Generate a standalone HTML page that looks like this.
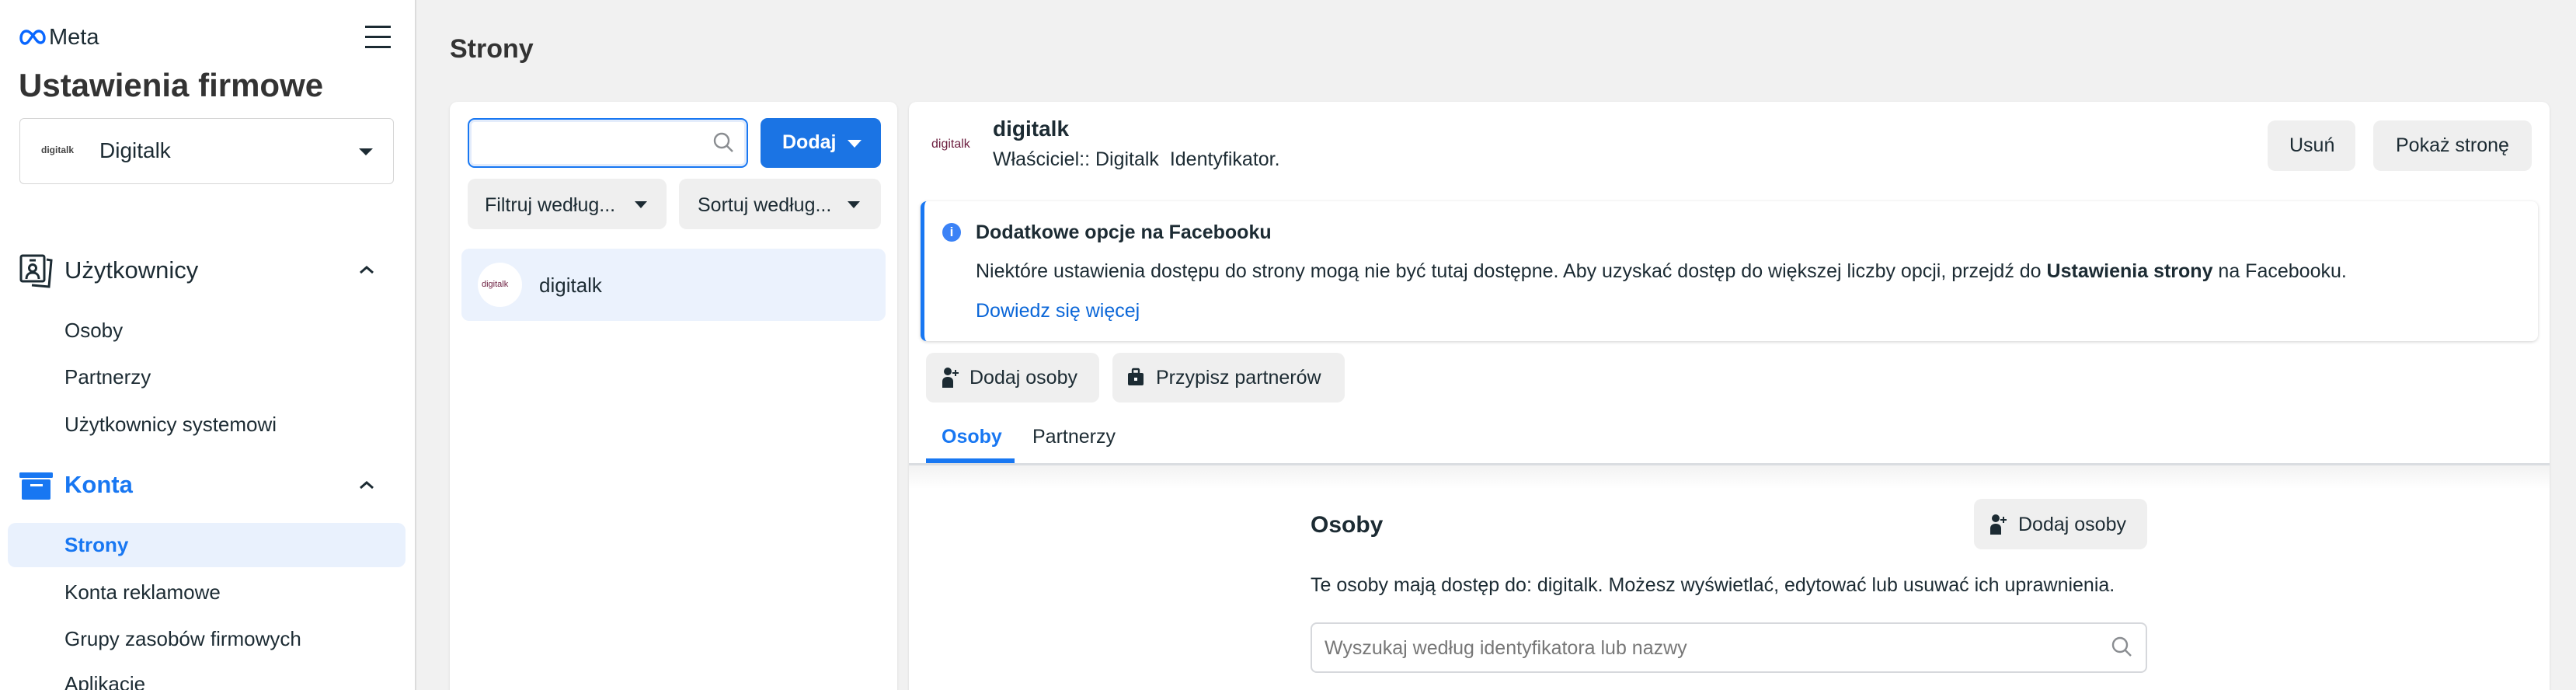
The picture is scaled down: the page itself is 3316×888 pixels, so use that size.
<!DOCTYPE html>
<html><head><meta charset="utf-8">
<style>
*{box-sizing:border-box;margin:0;padding:0}
html,body{width:3316px;height:888px;overflow:hidden}
body{background:#f1f1f1;font-family:"Liberation Sans",sans-serif;color:#1c2b33;position:relative}
.a{position:absolute}
.t{position:absolute;white-space:nowrap;line-height:1}
.btn{position:absolute;background:#efefef;border-radius:10px}
</style></head><body>
<!-- sidebar -->
<div class="a" style="left:0;top:0;width:536px;height:888px;background:#fff;border-right:2px solid #dcdcdc"></div>
<svg class="a" style="left:24px;top:37px" width="36" height="22" viewBox="0 0 34 22"><path d="M9 3C4 3 2 8 2 12c0 4 2 7 5 7 4 0 6-5 10-10 3-4 5-6 8-6 4 0 7 4 7 9 0 4-2 6-5 6-4 0-7-6-10-10C14 5 12 3 9 3z" fill="none" stroke="#0866ff" stroke-width="3.4"/></svg>
<div class="t" style="left:63px;top:34px;font-size:29px;color:#1c2b33">Meta</div>
<div class="a" style="left:470px;top:33px;width:33px;height:3px;background:#1c2b33"></div>
<div class="a" style="left:470px;top:46px;width:33px;height:3px;background:#1c2b33"></div>
<div class="a" style="left:470px;top:59px;width:33px;height:3px;background:#1c2b33"></div>
<div class="t" style="left:24px;top:89px;font-size:42px;font-weight:bold;color:#333">Ustawienia firmowe</div>
<div class="a" style="left:25px;top:152px;width:482px;height:85px;border:1.5px solid #d6d6d6;border-radius:6px"></div>
<div class="t" style="left:53px;top:187px;font-size:12px;font-weight:bold;color:#444">digitalk</div>
<div class="t" style="left:128px;top:180px;font-size:28px">Digitalk</div>
<div class="a" style="left:462px;top:191px;border-left:9px solid transparent;border-right:9px solid transparent;border-top:9px solid #1c2b33"></div>
<svg class="a" style="left:25px;top:327px" width="44" height="44" viewBox="0 0 44 44" fill="none" stroke="#1c2b33" stroke-width="3"><rect x="2" y="2" width="30" height="33" rx="2"/><circle cx="17" cy="18" r="4.5"/><path d="M9 32c0-6 4-8 8-8s8 2 8 8"/><path d="M13 8h8"/><path d="M35 7l6 1-3 34-22-2"/></svg>
<div class="t" style="left:83px;top:332px;font-size:31px">Użytkownicy</div>
<svg class="a" style="left:462px;top:340px" width="20" height="14"><path d="M2 11l8-7 8 7" fill="none" stroke="#1c2b33" stroke-width="3"/></svg>
<div class="t" style="left:83px;top:412px;font-size:26px">Osoby</div>
<div class="t" style="left:83px;top:472px;font-size:26px">Partnerzy</div>
<div class="t" style="left:83px;top:533px;font-size:26px">Użytkownicy systemowi</div>
<svg class="a" style="left:25px;top:608px" width="44" height="36"><rect x="0" y="0" width="43" height="7" rx="1.5" fill="#1877f2"/><rect x="3" y="9" width="37" height="26" rx="2" fill="#1877f2"/><rect x="14" y="15" width="16" height="3" fill="#fff"/></svg>
<div class="t" style="left:83px;top:608px;font-size:31px;font-weight:bold;color:#1877f2">Konta</div>
<svg class="a" style="left:462px;top:617px" width="20" height="14"><path d="M2 11l8-7 8 7" fill="none" stroke="#1c2b33" stroke-width="3"/></svg>
<div class="a" style="left:10px;top:673px;width:512px;height:57px;background:#e9f1fd;border-radius:10px"></div>
<div class="t" style="left:83px;top:688px;font-size:26px;font-weight:bold;color:#1877f2">Strony</div>
<div class="t" style="left:83px;top:749px;font-size:26px">Konta reklamowe</div>
<div class="t" style="left:83px;top:809px;font-size:26px">Grupy zasobów firmowych</div>
<div class="t" style="left:83px;top:867px;font-size:26px">Aplikacje</div>

<!-- main -->
<div class="t" style="left:579px;top:46px;font-size:34px;font-weight:bold;color:#333">Strony</div>
<div class="a" style="left:579px;top:131px;width:576px;height:770px;background:#fff;border-radius:10px;box-shadow:0 1px 3px rgba(0,0,0,.1)"></div>
<div class="a" style="left:602px;top:152px;width:361px;height:64px;border:2px solid #1877f2;border-radius:9px;box-shadow:inset 0 0 0 3px #e3ecfb"></div>
<svg class="a" style="left:917px;top:169px" width="30" height="30" fill="none" stroke="#8a8d91" stroke-width="2.4"><circle cx="12" cy="12" r="9"/><path d="M19 19l7 7"/></svg>
<div class="a" style="left:979px;top:152px;width:155px;height:64px;background:#1b74e4;border-radius:9px"></div>
<div class="t" style="left:1007px;top:171px;font-size:25px;font-weight:bold;color:#fff">Dodaj</div>
<div class="a" style="left:1091px;top:180px;border-left:9px solid transparent;border-right:9px solid transparent;border-top:10px solid #fff"></div>
<div class="btn" style="left:602px;top:230px;width:256px;height:65px"></div>
<div class="t" style="left:624px;top:252px;font-size:25px">Filtruj według...</div>
<div class="a" style="left:817px;top:259px;border-left:8px solid transparent;border-right:8px solid transparent;border-top:9px solid #1c2b33"></div>
<div class="btn" style="left:874px;top:230px;width:260px;height:65px"></div>
<div class="t" style="left:898px;top:252px;font-size:25px">Sortuj według...</div>
<div class="a" style="left:1091px;top:259px;border-left:8px solid transparent;border-right:8px solid transparent;border-top:9px solid #1c2b33"></div>
<div class="a" style="left:594px;top:320px;width:546px;height:93px;background:#ebf2fd;border-radius:10px"></div>
<div class="a" style="left:615px;top:338px;width:57px;height:57px;background:#fff;border-radius:50%"></div>
<div class="t" style="left:620px;top:361px;font-size:11px;color:#6b1d3e">digitalk</div>
<div class="t" style="left:694px;top:354px;font-size:26px">digitalk</div>

<!-- right panel -->
<div class="a" style="left:1170px;top:131px;width:2112px;height:770px;background:#fff;border-radius:10px;box-shadow:0 1px 3px rgba(0,0,0,.1)"></div>
<div class="t" style="left:1199px;top:178px;font-size:16px;color:#6b1d3e">digitalk</div>
<div class="t" style="left:1278px;top:152px;font-size:28px;font-weight:bold">digitalk</div>
<div class="t" style="left:1278px;top:193px;font-size:25px">Właściciel:: Digitalk&nbsp; Identyfikator.</div>
<div class="btn" style="left:2919px;top:155px;width:113px;height:65px"></div>
<div class="t" style="left:2947px;top:175px;font-size:25px">Usuń</div>
<div class="btn" style="left:3055px;top:155px;width:204px;height:65px"></div>
<div class="t" style="left:3084px;top:175px;font-size:25px">Pokaż stronę</div>

<div class="a" style="left:1185px;top:259px;width:2082px;height:180px;background:#fff;border-radius:8px;border-left:5px solid #1877f2;box-shadow:0 1px 4px rgba(0,0,0,.18)"></div>
<div class="a" style="left:1213px;top:287px;width:24px;height:24px;border-radius:50%;background:#3b82f6;color:#fff;font-size:17px;font-weight:bold;text-align:center;line-height:24px">i</div>
<div class="t" style="left:1256px;top:287px;font-size:25px;font-weight:bold">Dodatkowe opcje na Facebooku</div>
<div class="t" style="left:1256px;top:337px;font-size:25px">Niektóre ustawienia dostępu do strony mogą nie być tutaj dostępne. Aby uzyskać dostęp do większej liczby opcji, przejdź do <b>Ustawienia strony</b> na Facebooku.</div>
<div class="t" style="left:1256px;top:388px;font-size:25px;color:#0a66d8">Dowiedz się więcej</div>

<div class="btn" style="left:1192px;top:454px;width:223px;height:64px"></div>
<svg class="a" style="left:1212px;top:472px" width="22" height="28"><circle cx="8" cy="6" r="5" fill="#1c2b33"/><path d="M1 27v-8c0-4 3-6 7-6s7 2 7 6v8z" fill="#1c2b33"/><path d="M18 4v8M14 8h8" stroke="#1c2b33" stroke-width="2"/></svg>
<div class="t" style="left:1248px;top:474px;font-size:25px">Dodaj osoby</div>
<div class="btn" style="left:1432px;top:454px;width:299px;height:64px"></div>
<svg class="a" style="left:1451px;top:473px" width="22" height="24"><rect x="1" y="7" width="20" height="16" rx="2" fill="#1c2b33"/><rect x="7" y="2" width="8" height="6" rx="1" fill="none" stroke="#1c2b33" stroke-width="2.4"/><rect x="9" y="13" width="4" height="4" fill="#fff"/></svg>
<div class="t" style="left:1488px;top:474px;font-size:25px">Przypisz partnerów</div>

<div class="t" style="left:1212px;top:550px;font-size:25px;font-weight:bold;color:#1877f2">Osoby</div>
<div class="t" style="left:1329px;top:550px;font-size:25px">Partnerzy</div>
<div class="a" style="left:1192px;top:590px;width:114px;height:7px;background:#1877f2"></div>
<div class="a" style="left:1170px;top:596px;width:2112px;height:3px;background:#dadde1"></div>
<div class="a" style="left:1170px;top:599px;width:2112px;height:30px;background:linear-gradient(#f2f2f2,#fff)"></div>

<div class="t" style="left:1687px;top:661px;font-size:30px;font-weight:bold">Osoby</div>
<div class="btn" style="left:2541px;top:642px;width:223px;height:65px"></div>
<svg class="a" style="left:2561px;top:661px" width="22" height="28"><circle cx="8" cy="6" r="5" fill="#1c2b33"/><path d="M1 27v-8c0-4 3-6 7-6s7 2 7 6v8z" fill="#1c2b33"/><path d="M18 4v8M14 8h8" stroke="#1c2b33" stroke-width="2"/></svg>
<div class="t" style="left:2598px;top:663px;font-size:25px">Dodaj osoby</div>
<div class="t" style="left:1687px;top:741px;font-size:25px">Te osoby mają dostęp do: digitalk. Możesz wyświetlać, edytować lub usuwać ich uprawnienia.</div>
<div class="a" style="left:1687px;top:801px;width:1077px;height:65px;border:2px solid #d6d8dc;border-radius:8px"></div>
<div class="t" style="left:1705px;top:822px;font-size:25px;color:#777">Wyszukaj według identyfikatora lub nazwy</div>
<svg class="a" style="left:2717px;top:818px" width="30" height="30" fill="none" stroke="#8a8d91" stroke-width="2.4"><circle cx="12" cy="12" r="9"/><path d="M19 19l7 7"/></svg>
</body></html>
